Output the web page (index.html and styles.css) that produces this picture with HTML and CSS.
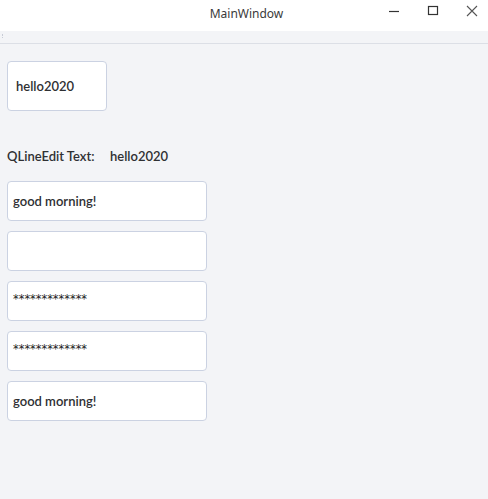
FILE: index.html
```html
<!DOCTYPE html>
<html>
<head>
<meta charset="utf-8">
<link rel="stylesheet" href="styles.css">
</head>
<body>
<div class="window">
  <div class="titlebar">
    <span class="title">MainWindow</span>
    <div class="controls">
      <svg class="ctl" width="12" height="12" viewBox="0 0 12 12"><path d="M1 6.5H11" stroke="#333" stroke-width="1.2" fill="none"/></svg>
      <svg class="ctl" width="12" height="12" viewBox="0 0 12 12"><rect x="1.5" y="1.5" width="9" height="8" stroke="#333" stroke-width="1.2" fill="none"/></svg>
      <svg class="ctl" width="12" height="12" viewBox="0 0 12 12"><path d="M1 1L11 11M11 1L1 11" stroke="#555" stroke-width="1.1" fill="none"/></svg>
    </div>
  </div>
  <div class="menubar"><span class="grip"></span></div>
  <div class="content">
    <div class="bigedit">hello2020</div>
    <div class="labelrow">
      <span class="lbl">QLineEdit Text:</span>
      <span class="val">hello2020</span>
    </div>
    <div class="fields">
      <div class="field">good morning!</div>
      <div class="field"></div>
      <div class="field pw">*************</div>
      <div class="field pw">*************</div>
      <div class="field">good morning!</div>
    </div>
  </div>
</div>
</body>
</html>
```
FILE: styles.css
```css
html, body {
  margin: 0;
  padding: 0;
  background: #f3f4f7;
  font-family: "Lato", "Noto Sans", sans-serif;
  color: #2f3033;
}
.window {
  width: 488px;
  height: 499px;
  display: flex;
  flex-direction: column;
}
.titlebar {
  height: 31px;
  background: #ffffff;
  position: relative;
  display: flex;
  align-items: center;
  justify-content: center;
}
.title {
  font-family: "Noto Sans", sans-serif;
  font-size: 12px;
  color: #3a3a3a;
  margin-left: 5px;
  margin-top: -5px;
}
.controls {
  position: absolute;
  right: 0;
  top: 5px;
  display: flex;
  gap: 27px;
  padding-right: 10px;
}
.menubar {
  height: 12px;
  border-bottom: 1px solid #dcdfe6;
  position: relative;
}
.grip {
  position: absolute;
  left: 2px;
  top: 3px;
  width: 1px;
  height: 4px;
  border-left: 1px dotted #c8ccd6;
}
.content {
  padding: 17px 7px 0 7px;
  display: flex;
  flex-direction: column;
}
.bigedit {
  height: 48px;
  border: 1px solid #cbd2e2;
  border-radius: 4px;
  background: #fff;
  display: flex;
  align-items: center;
  padding-left: 8px;
  width: 90px;
  font-size: 13px;
  font-weight: 600;
}
.labelrow {
  margin-top: 35px;
  height: 20px;
  display: flex;
  align-items: center;
  font-size: 13px;
  font-weight: 600;
}
.lbl {
  width: 103px;
}
.fields {
  margin-top: 15px;
  display: flex;
  flex-direction: column;
  gap: 10px;
}
.field {
  width: 193px;
  height: 38px;
  padding-left: 5px;
  border: 1px solid #cbd2e2;
  border-radius: 4px;
  background: #fff;
  display: flex;
  align-items: center;
  font-size: 13px;
  font-weight: 600;
}
.field.pw {
  font-family: "DejaVu Sans", sans-serif;
  font-weight: 400;
  font-size: 11.4px;
  color: #222;
  padding-bottom: 4px;
  height: 34px;
}
```
